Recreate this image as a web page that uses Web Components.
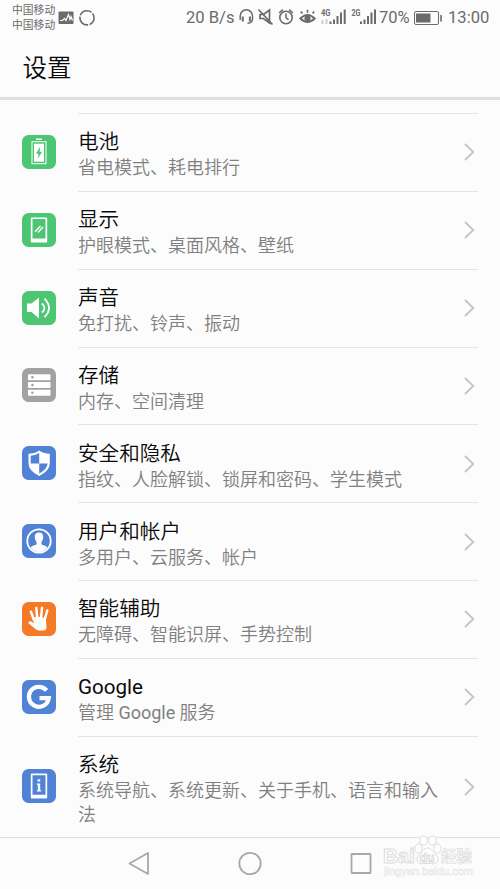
<!DOCTYPE html>
<html lang="zh-CN">
<head>
<meta charset="utf-8">
<title>设置</title>
<style>
    html, body {
        margin: 0;
        height: 100%;
        overflow: hidden;
        background: #fcfcfc;
        font-family: Roboto, "Noto Sans CJK SC", sans-serif;
    }
</style>
</head>
<body>
<settings-screen></settings-screen>

<script>
// Row icons, drawn on a 34x34 tile
const ROW_ICONS = {
    battery: `
        <path d="M14 4.2h6" stroke="#fff" stroke-width="1.6"/>
        <rect x="10" y="6.7" width="14" height="22" fill="none" stroke="#fff" stroke-width="1"/>
        <rect x="12" y="8.7" width="10" height="18" fill="#fff"/>
        <path d="M18.2 11.5l-4.2 7.2h2.6l-.6 5 4-7h-2.4z" fill="var(--tile)"/>`,
    display: `
        <path fill-rule="evenodd" d="M9.7 4.5h14.6a.9.9 0 0 1 .9.9v23.2a.9.9 0 0 1-.9.9H9.7a.9.9 0 0 1-.9-.9V5.4a.9.9 0 0 1 .9-.9zM10.5 6v19.5h13V6z" fill="#fff"/>
        <path d="M13 18.8l5.5-5.8M16 19.5l5-5.4" stroke="#fff" stroke-width="1.4"/>`,
    sound: `
        <path d="M5 12.5h4.5L17 6.5v21l-7.5-6.5H5z" fill="#fff"/>
        <path d="M20 12.5q5 4.5 0 9M22.5 7.6q9 9.3 0 18.6" fill="none" stroke="#fff" stroke-width="1.8"/>`,
    storage: `
        <g fill="#fff"><rect x="6" y="6.3" width="22.5" height="6" rx=".8"/><rect x="6" y="14" width="22.5" height="6" rx=".8"/><rect x="6" y="21.7" width="22.5" height="6" rx=".8"/></g>
        <g fill="var(--tile)"><circle cx="10.4" cy="9.3" r="1.3"/><circle cx="10.4" cy="17" r="1.3"/><circle cx="10.4" cy="24.7" r="1.3"/></g>`,
    security: `
        <path d="M17.2 4.5Q22 7.8 27.8 7.8V17q0 8-10.6 13Q6.5 25 6.5 17V7.8Q12.4 7.8 17.2 4.5z" fill="#fff"/>
        <path d="M17.2 7v10.5H8.7V9.7Q13 9.5 17.2 7zM17.2 17.5h8.4q-.4 6-8.4 10z" fill="var(--tile)"/>`,
    user: `
        <circle cx="17" cy="17" r="11.7" fill="none" stroke="#fff" stroke-width="1.8"/>
        <path d="M17 8.5c-3 0-4.4 2-4.2 4.7.1 2 .8 3.7 1.8 4.8v2.2c-1.2 1.2-4.6 1.2-6 3.2A11 11 0 0 0 17 28a11 11 0 0 0 8.4-4.600c-1.4-2-4.8-2-6-3.200V18c1-1.100 1.700-2.800 1.800-4.800.2-2.700-1.200-4.700-4.200-4.700z" fill="#fff"/>`,
    hand: `
        <path d="M11.8 17.5L8.9 9.7M15.3 16.5L14.3 6M19 16.5L20 5.8M22.7 17.5L25.3 8.5" stroke="#fff" stroke-width="2.5" stroke-linecap="round"/>
        <path d="M10.6 16Q17 13.5 23.9 16.5L24.5 25.5Q24.3 28.5 21.5 28.5H17q-2.5 0-4.5-2.3L6.8 21.6Q5.8 20 7.2 19.4 9 19 11.9 21.3z" fill="#fff"/>`,
    google: `
        <path d="M24.6 10.400A10 10 0 1 0 26.800 18.200H17.5" fill="none" stroke="#fff" stroke-width="4.2"/>`,
    system: `
        <path fill-rule="evenodd" d="M9.7 4.5h14.6a.9.9 0 0 1 .9.9v23.2a.9.9 0 0 1-.9.9H9.7a.9.9 0 0 1-.9-.9V5.4a.9.9 0 0 1 .9-.9zM10.5 6.2v19.5h13V6.2z" fill="#fff"/>
        <path d="M15.6 10.2h2.6v2.2h-2.6zM14.8 14.4h3.4v6.800h1v1.300h-4.400v-1.300h1v-5.500h-1z" fill="#fff"/>`
};

const ROWS = [
    ['battery', '#4cc673', '电池', '省电模式、耗电排行'],
    ['display', '#4cc673', '显示', '护眼模式、桌面风格、壁纸'],
    ['sound', '#4cc673', '声音', '免打扰、铃声、振动'],
    ['storage', '#a2a2a2', '存储', '内存、空间清理'],
    ['security', '#5082d6', '安全和隐私', '指纹、人脸解锁、锁屏和密码、学生模式'],
    ['user', '#5082d6', '用户和帐户', '多用户、云服务、帐户'],
    ['hand', '#f47a28', '智能辅助', '无障碍、智能识屏、手势控制'],
    ['google', '#5082d6', '<i>Google</i>', '管理 <i>Google</i> 服务'],
    ['system', '#5082d6', '系统', '系统导航、系统更新、关于手机、语言和输入法']
];

class StatusBar extends HTMLElement {
    constructor() {
        super();
        this.attachShadow({ mode: 'open' }).innerHTML = `
            <style>
                :host {
                    display: flex;
                    justify-content: space-between;
                    align-items: center;
                    box-sizing: border-box;
                    height: 36px;
                    padding: 0 11px 0 12px;
                    color: #6b6b6b;
                    fill: none;
                    stroke: #6b6b6b;
                }
                div { display: flex; align-items: center; }
                svg { display: block; flex: none; }
                .carriers {
                    display: block;
                    width: 46px;
                    font-size: 10.8px;
                    line-height: 15.5px;
                    white-space: nowrap;
                }
                .text { font-size: 17px; line-height: 36px; white-space: nowrap; }
                .speed { width: 51px; font-size: 16.6px; }
                .percent { width: 34px; font-size: 16.5px; }
                .clock { width: 41px; font-size: 16.6px; }
            </style>
            <div class="left">
                <div class="carriers">中国移动<br>中国移动</div>
                <svg width="40" height="20" viewBox="58 7 40 20">
                    <rect x="58.5" y="10.5" width="15" height="12.5" rx="1" fill="#6b6b6b" stroke="none"/>
                    <path d="M60 19.5h2.500l2-2 1.500 2 2.500-6 1.500 5 1-3 1.500 4" stroke="#fff" stroke-width="1.2"/>
                    <circle cx="87" cy="16.8" r="7.1" stroke-width="1.6" stroke-dasharray="13.4 1.47" stroke-dashoffset="5"/>
                </svg>
            </div>
            <div>
                <span class="text speed">20 B/s</span>
                <svg width="142" height="36" viewBox="238 0 142 36">
                    <path d="M241.200 20v-4a6 6 0 0 1 12.300 0v3q0 4-5 4.200" stroke-width="1.5"/>
                    <path d="M243.800 16.500v5M250.900 16.500v5" stroke-width="2"/>
                    <path d="M261 14.500h3.500l6-4.500v13l-6-4.500H261zM259.500 9.500l14 15" stroke-width="1.7"/>
                    <circle cx="287" cy="17.5" r="6.2" stroke-width="1.6"/>
                    <path d="M287 13.500v4l2.500 2.300M280 13l3.800-3.300M294 13l-3.800-3.300" stroke-width="1.6"/>
                    <path d="M301.300 18.500q7.200-7 14.400 0-7.200 7-14.400 0z" stroke-width="1.9"/>
                    <circle cx="308.500" cy="18.500" r="2.7" fill="#6b6b6b"/>
                    <path d="M303.500 13.500l-1.800-2M308.500 12.800V9.800M313.500 13.500l1.800-2" stroke-width="1.7"/>
                    <g stroke="none" fill="#6b6b6b">
                        <text x="322" y="16" font-size="9.5" font-weight="700" textLength="9.5" lengthAdjust="spacingAndGlyphs">4G</text>
                        <path d="M322.500 20h2v4h-2zM326.500 19h2v5h-2z" opacity=".3"/>
                        <path d="M330.500 21.500h2V24h-2zM334 19.500h2V24h-2zM337.500 16h2v8h-2zM341 12.500h2V24h-2zM344.700 9.500h2V24h-2z"/>
                        <text x="352.500" y="16" font-size="9.5" font-weight="700" textLength="9" lengthAdjust="spacingAndGlyphs">2G</text>
                        <path d="M361 21.500h2V24h-2zM364.500 19.500h2V24h-2zM368 16h2v8h-2zM371.500 12.500h2V24h-2zM375 9.500h2V24h-2z"/>
                    </g>
                </svg>
                <span class="text percent">70%</span>
                <svg width="35" height="20" viewBox="414 7 35 20">
                    <rect x="415.500" y="10.500" width="24" height="13" rx="1.5" stroke-width="1"/>
                    <rect x="417" y="12.500" width="14.500" height="9" fill="#6b6b6b" stroke="none"/>
                    <path d="M442 14v6.500" stroke-width="1.6"/>
                </svg>
                <span class="text clock">13:00</span>
            </div>`;
    }
}

class SettingsRow extends HTMLElement {
    constructor() {
        super();
        this.attachShadow({ mode: 'open' });
    }

    connectedCallback() {
        this.shadowRoot.innerHTML = `
            <style>
                :host { display: flex; align-items: center; padding-left: 22px; }
                .tile { display: block; flex: none; border-radius: 6.5px; background: var(--tile); }
                .body {
                    flex: 1;
                    display: flex;
                    align-items: center;
                    box-sizing: border-box;
                    min-height: 77.85px;
                    margin: 0 22px;
                    padding: 12px 0 10px;
                    border-top: 1px solid #e4e4e4;
                }
                .texts { flex: 1; padding-top: 2px; }
                .arrow { display: block; flex: none; margin: 0 3px 2px 23px; }
                ::slotted([slot=title]) { display: block; font-size: 20.6px; line-height: 28px; color: #0a0a0a; font-weight: 350; }
                ::slotted([slot=summary]) { display: block; font-size: 18px; line-height: 24px; color: #808080; font-weight: 350; }
            </style>
            <svg class="tile" width="34" height="34" viewBox="0 0 34 34">${ROW_ICONS[this.getAttribute('icon')]}</svg>
            <div class="body">
                <div class="texts"><slot name="title"></slot><slot name="summary"></slot></div>
                <svg class="arrow" width="12" height="20" viewBox="0 0 12 20"><path d="M2 2l8.300 8L2 18" fill="none" stroke="#c4c4c4" stroke-width="1.8"/></svg>
            </div>`;
    }
}

class NavBar extends HTMLElement {
    constructor() {
        super();
        this.attachShadow({ mode: 'open' }).innerHTML = `
            <style>
                :host {
                    display: flex;
                    align-items: center;
                    justify-content: center;
                    gap: 86px;
                    height: 51px;
                    border-top: 1px solid #dedede;
                }
                svg { display: block; fill: none; stroke: #a8a8a8; stroke-width: 1.8; }
            </style>
            <svg width="25" height="25"><path d="M21 2v21L2.500 12.500z" stroke-linejoin="round"/></svg>
            <svg width="25" height="25"><circle cx="12" cy="12.500" r="10.700"/></svg>
            <svg width="25" height="25"><rect x="2.500" y="3" width="19" height="19" rx=".5"/></svg>`;
    }
}

class WaterMark extends HTMLElement {
    constructor() {
        super();
        this.attachShadow({ mode: 'open' }).innerHTML = `
            <style>
                :host { display: block; }
                svg { display: block; fill: #fefefe; stroke: #dcdcdc; stroke-width: 1; }
                text { font-family: "Liberation Sans", "Noto Sans CJK SC", sans-serif; font-weight: 700; }
                .site { fill: #f6f6f6; stroke: #e6e6e6; stroke-width: .5; font-weight: 400; }
            </style>
            <svg width="96" height="46" viewBox="382 834 96 46">
                <text x="383" y="863" font-size="21" textLength="32" lengthAdjust="spacingAndGlyphs">Bai</text>
                <ellipse cx="418.500" cy="848.500" rx="3.600" ry="4.800"/>
                <ellipse cx="423.500" cy="840.500" rx="3.700" ry="4.500"/>
                <ellipse cx="432.500" cy="840.500" rx="3.700" ry="4.500"/>
                <ellipse cx="437.500" cy="848.500" rx="3.500" ry="4.800"/>
                <path d="M427.500 848c-4 0-5 4-8 6.500-5 4.500-2 10.500 4 9h8c6 1.500 9-4.500 4-9-3-2.500-4-6.500-8-6.500z"/>
                <text x="419.500" y="861.500" font-size="13" textLength="15" lengthAdjust="spacingAndGlyphs">du</text>
                <text x="441" y="862" font-size="15.500" textLength="31" lengthAdjust="spacingAndGlyphs" stroke-width=".7">经验</text>
                <text class="site" x="384" y="875" font-size="11" textLength="89" lengthAdjust="spacingAndGlyphs">jingyan.baidu.com</text>
            </svg>`;
    }
}

class SettingsScreen extends HTMLElement {
    constructor() {
        super();
        this.attachShadow({ mode: 'open' });
        const rows = ROWS.map(([icon, color, title, summary]) => `
            <settings-row icon="${icon}" style="--tile: ${color}">
                <span slot="title">${title}</span>
                <span slot="summary">${summary}</span>
            </settings-row>`).join('');

        this.shadowRoot.innerHTML = `
            <style>
                :host { display: flex; flex-direction: column; height: 889px; position: relative; }
                h1 {
                    flex: none;
                    box-sizing: border-box;
                    height: 64px;
                    margin: 0;
                    padding: 1px 0 0 22.5px;
                    border-bottom: 3px solid #dfdfdf;
                    font-size: 24.5px;
                    font-weight: 350;
                    line-height: 63px;
                    color: #0a0a0a;
                }
                /* Latin words sit next to the lighter CJK weight */
                i { font-style: normal; font-weight: 400; }
                status-bar { flex: none; }
                main { flex: 1; padding-top: 13px; }
                nav-bar { flex: none; }
                water-mark { position: absolute; right: 22px; bottom: 9px; }
            </style>
            <status-bar></status-bar>
            <h1>设置</h1>
            <main>${rows}</main>
            <nav-bar></nav-bar>
            <water-mark></water-mark>`;
    }
}

customElements.define('status-bar', StatusBar);
customElements.define('settings-row', SettingsRow);
customElements.define('nav-bar', NavBar);
customElements.define('water-mark', WaterMark);
customElements.define('settings-screen', SettingsScreen);
</script>
</body>
</html>
